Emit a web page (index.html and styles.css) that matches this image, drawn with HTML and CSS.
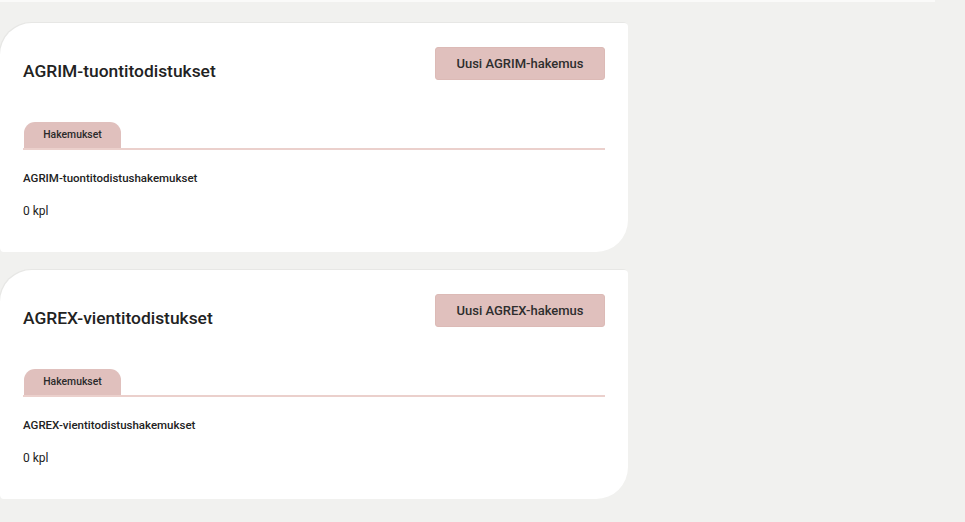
FILE: index.html
```html
<!DOCTYPE html>
<html lang="fi">
<head>
<meta charset="utf-8">
<title>Todistukset</title>
<link rel="stylesheet" href="styles.css">
</head>
<body>
<div class="topstrip"></div>
<main class="cards">
  <section class="card">
    <div class="card-head">
      <h2 class="card-title">AGRIM-tuontitodistukset</h2>
      <button class="btn">Uusi AGRIM-hakemus</button>
    </div>
    <div class="tabs">
      <div class="tab">Hakemukset</div>
    </div>
    <p class="list-title">AGRIM-tuontitodistushakemukset</p>
    <p class="count">0 kpl</p>
  </section>
  <section class="card">
    <div class="card-head">
      <h2 class="card-title">AGREX-vientitodistukset</h2>
      <button class="btn">Uusi AGREX-hakemus</button>
    </div>
    <div class="tabs">
      <div class="tab">Hakemukset</div>
    </div>
    <p class="list-title">AGREX-vientitodistushakemukset</p>
    <p class="count">0 kpl</p>
  </section>
</main>
</body>
</html>
```
FILE: styles.css
```css
html, body {
  margin: 0;
  padding: 0;
}
body {
  background: #f1f1ef;
  font-family: Roboto, "Liberation Sans", sans-serif;
  color: #222;
  height: 522px;
  overflow: hidden;
}
.topstrip {
  width: 935px;
  height: 2px;
  background: #fafaf9;
}
.cards {
  display: flex;
  flex-direction: column;
  gap: 18px;
  padding-top: 21px;
  width: 628px;
}
.card {
  background: #fff;
  border-radius: 32px 4px 32px 4px;
  padding: 24px 23px 0 23px;
  height: 205px;
  box-shadow: -1px -1px 0 rgba(0,0,0,0.04);
}
.card-head {
  display: flex;
  justify-content: space-between;
  align-items: flex-start;
}
.card-title {
  margin: 12px 0 0 0;
  font-size: 17.4px;
  line-height: 24px;
  font-weight: 500;
  color: #222;
}
.btn {
  width: 170px;
  height: 33px;
  background: #e0c0bd;
  border: 1px solid #dcbab6;
  border-radius: 3px;
  font-family: inherit;
  font-size: 13px;
  font-weight: 500;
  color: #2e2e2e;
  padding: 0;
}
.tabs {
  margin-top: 39px;
  border-bottom: 2px solid #ebd0cc;
  display: flex;
}
.tab {
  margin-left: 1px;
  width: 97px;
  height: 26px;
  background: #e0c0bd;
  border-radius: 11px 11px 0 0;
  font-size: 10.4px;
  font-weight: 500;
  line-height: 26px;
  text-align: center;
  color: #2a2a2a;
}
.list-title {
  margin: 20px 0 0 0;
  font-size: 11.5px;
  line-height: 16px;
  font-weight: 500;
  color: #222;
}
.count {
  margin: 17px 0 0 0;
  font-size: 12px;
  line-height: 16px;
  color: #222;
}
```
